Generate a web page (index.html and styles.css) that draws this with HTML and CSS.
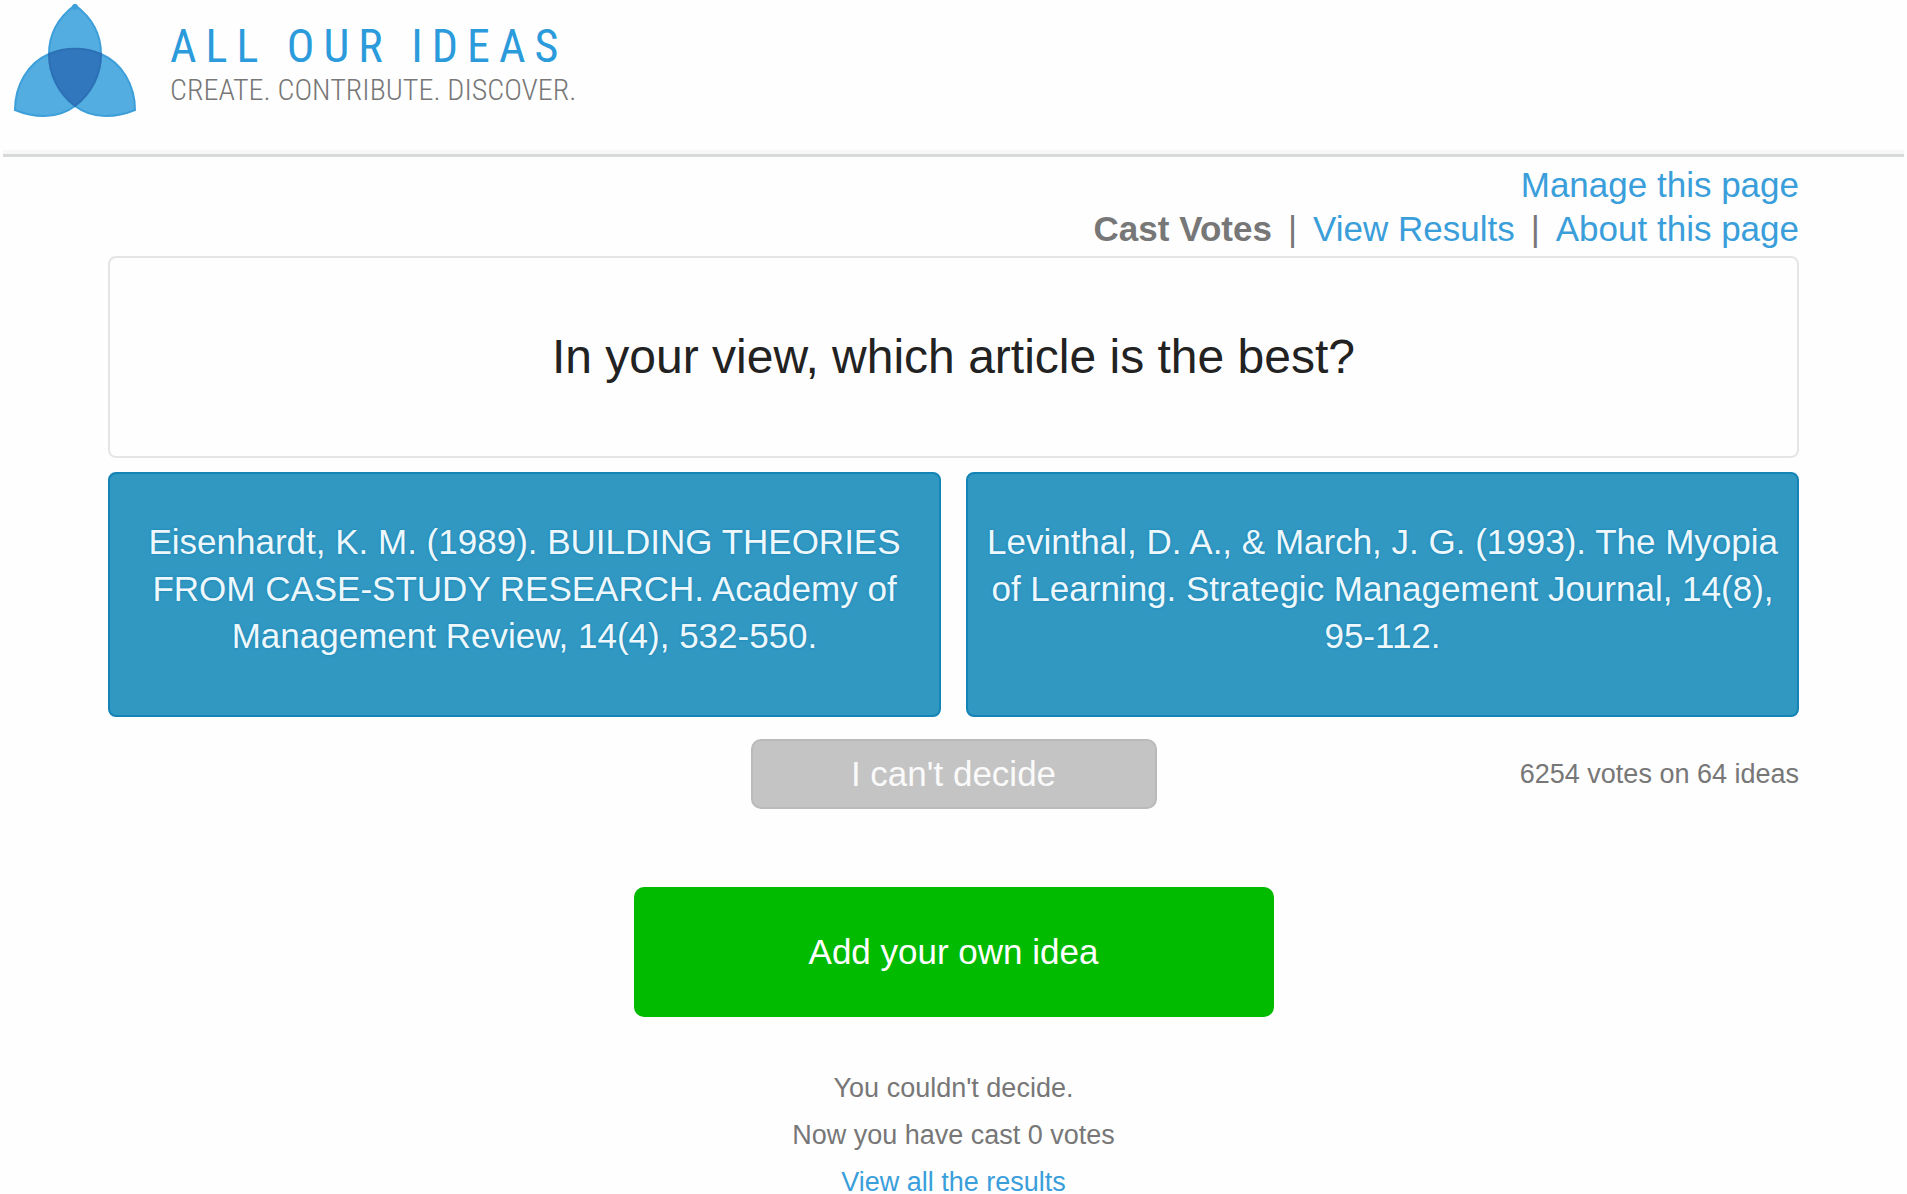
FILE: index.html
```html
<!DOCTYPE html>
<html lang="en">
<head>
    <meta charset="UTF-8">
    <meta name="viewport" content="width=device-width, initial-scale=1.0">
    <title>All Our Ideas</title>
    <link rel="stylesheet" href="styles.css">
</head>
<body>
    <header class="header">
        <svg class="logo" viewBox="0 0 126 118" aria-hidden="true">
            <g class="logo-petals">
                <path d="M63 5C47 17 37 34 37 54L89 54C89 34 79 17 63 5Z"/>
                <path d="M37 54C16 63 3 85 3 110C25 119 47 118 63 106C46 93 37 74 37 54Z"/>
                <path d="M89 54C110 63 123 85 123 110C101 119 79 118 63 106C80 93 89 74 89 54Z"/>
            </g>
            <path class="logo-core" d="M37 54C53 47 73 47 89 54C89 74 80 93 63 106C46 93 37 74 37 54Z"/>
            <circle class="logo-tip" cx="63" cy="7" r="3"/>
        </svg>
        <div class="brand">
            <div class="brand-name">ALL OUR IDEAS</div>
            <div class="brand-tagline">CREATE. CONTRIBUTE. DISCOVER.</div>
        </div>
    </header>
    <main class="container">
        <nav class="nav">
            <div class="nav-row"><a href="#">Manage this page</a></div>
            <div class="nav-row">
                <strong>Cast Votes</strong>
                <span>|</span>
                <a href="#">View Results</a>
                <span>|</span>
                <a href="#">About this page</a>
            </div>
        </nav>
        <h1 class="question">In your view, which article is the best?</h1>
        <div class="choices">
            <button type="button" class="choice">Eisenhardt, K. M. (1989). BUILDING THEORIES FROM CASE-STUDY RESEARCH. Academy of Management Review, 14(4), 532-550.</button>
            <button type="button" class="choice">Levinthal, D. A., &amp; March, J. G. (1993). The Myopia of Learning. Strategic Management Journal, 14(8), 95-112.</button>
        </div>
        <div class="skip-row">
            <button type="button" class="skip-btn">I can't decide</button>
            <div class="vote-count">6254 votes on 64 ideas</div>
        </div>
        <button type="button" class="add-btn">Add your own idea</button>
        <div class="status">
            <div>You couldn't decide.</div>
            <div>Now you have cast 0 votes</div>
            <a href="#">View all the results</a>
        </div>
    </main>
</body>
</html>
```
FILE: styles.css
```css
* {
    box-sizing: border-box;
}
body {
    margin: 0;
    font-family: "Liberation Sans", Arial, sans-serif;
    font-size: 35px;
    color: #777;
    background-color: #fefefe;
}
a {
    color: #3a9edb;
    text-decoration: none;
}
a:hover {
    text-decoration: underline;
}
button {
    font-family: inherit;
    font-size: 35px;
    cursor: pointer;
}
.header {
    display: flex;
    gap: 32px;
    height: 157px;
    margin: 0 3px;
    padding-left: 9px;
    border-bottom: 3px solid #d7dad9;
    box-shadow: inset 0 -4px #f6f8f7;
}
.logo {
    width: 126px;
    height: 118px;
}
.logo-petals {
    fill: #53ade1;
    stroke: #3d9fda;
    stroke-width: 2;
}
.logo-core {
    fill: #3077bd;
    stroke: #2d70b5;
    stroke-width: 2;
}
.logo-tip {
    fill: #3d9fda;
}
.brand {
    padding-top: 20px;
    font-family: "Roboto Condensed", Roboto, "Liberation Sans", sans-serif;
}
.brand-name {
    font-size: 46px;
    line-height: 52px;
    letter-spacing: 9px;
    color: #2b9bdc;
}
.brand-tagline {
    font-size: 30px;
    font-weight: 300;
    line-height: 36px;
    color: #777;
}
.container {
    margin: 0 108px;
}
.nav {
    padding: 6px 0 5px;
    line-height: 44px;
}
.nav-row {
    display: flex;
    justify-content: flex-end;
    gap: 16px;
}
.question {
    margin: 0;
    padding: 72px 20px;
    border: 2px solid #e5e5e5;
    border-radius: 8px;
    font-size: 48px;
    font-weight: normal;
    line-height: 54px;
    text-align: center;
    color: #222;
}
.choices {
    display: grid;
    grid-template-columns: 1fr 1fr;
    gap: 25px;
    margin-top: 14px;
}
.choice {
    padding: 44px 16px 56px;
    border: 2px solid #1483b5;
    border-radius: 8px;
    background-color: #3198c2;
    color: #eef8fc;
    line-height: 47px;
    text-shadow: 0 0 3px #1483b5;
}
.skip-row {
    display: grid;
    grid-template-columns: 1fr 406px 1fr;
    align-items: center;
    margin-top: 22px;
}
.skip-btn {
    grid-column: 2;
    height: 70px;
    border: 2px solid #bababa;
    border-radius: 10px;
    background-color: #c4c4c4;
    color: #fafafa;
}
.vote-count {
    font-size: 27px;
    text-align: right;
}
.add-btn {
    display: block;
    width: 640px;
    height: 130px;
    margin: 78px auto 0;
    border: 0;
    border-radius: 10px;
    background-color: #00bb00;
    color: #fff;
}
.status {
    display: flex;
    flex-direction: column;
    align-items: center;
    gap: 23px;
    margin-top: 59px;
    font-size: 27px;
    line-height: 24px;
}
```
